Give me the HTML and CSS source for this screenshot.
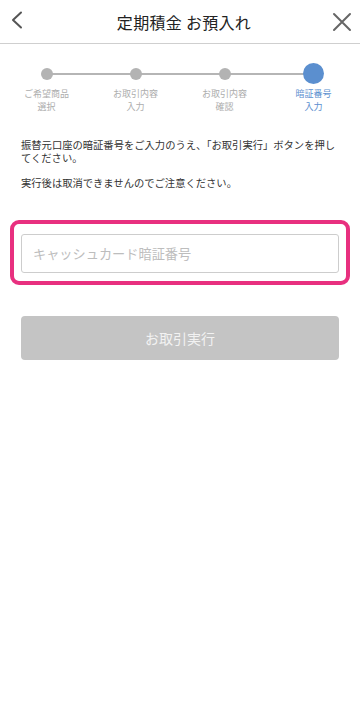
FILE: index.html
```html
<!DOCTYPE html>
<html lang="ja">
<head>
<meta charset="utf-8">
<meta name="viewport" content="width=device-width, initial-scale=1">
<title>定期積金 お預入れ</title>
<link rel="stylesheet" href="styles.css">
</head>
<body>
<header class="header">
  <button class="icon-btn back" aria-label="戻る">
    <svg width="20" height="24" viewBox="0 0 20 24"><path d="M11 2.5 L3 10 L11 17.5" fill="none" stroke="#555" stroke-width="2" stroke-linecap="round" stroke-linejoin="round"/></svg>
  </button>
  <h1 class="title">定期積金 お預入れ</h1>
  <button class="icon-btn close" aria-label="閉じる">
    <svg width="20" height="20" viewBox="0 0 20 20"><path d="M2 2 L18 18 M18 2 L2 18" fill="none" stroke="#666" stroke-width="2" stroke-linecap="round"/></svg>
  </button>
</header>

<ol class="stepper">
  <li class="step"><span class="dot-wrap"><span class="dot"></span></span><span class="label">ご希望商品<br>選択</span></li>
  <li class="step"><span class="dot-wrap"><span class="dot"></span></span><span class="label">お取引内容<br>入力</span></li>
  <li class="step"><span class="dot-wrap"><span class="dot"></span></span><span class="label">お取引内容<br>確認</span></li>
  <li class="step active"><span class="dot-wrap"><span class="dot"></span></span><span class="label">暗証番号<br>入力</span></li>
</ol>

<main class="content">
  <p class="text">振替元口座の暗証番号をご入力のうえ、「お取引実行」ボタンを押してください。</p>
  <p class="text second">実行後は取消できませんのでご注意ください。</p>

  <div class="highlight">
    <input class="pin" type="password" placeholder="キャッシュカード暗証番号">
  </div>

  <button class="submit" disabled>お取引実行</button>
</main>
</body>
</html>
```

FILE: styles.css
```css
* { box-sizing: border-box; }
html, body { margin: 0; padding: 0; background: #fff; }
body {
  font-family: "Noto Sans CJK JP", "Noto Sans", sans-serif;
  color: #333;
  width: 360px;
}

.header {
  height: 44px;
  border-bottom: 1px solid #cfcfcf;
  display: flex;
  align-items: center;
  justify-content: space-between;
  padding: 0 8px 0 10px;
}
.icon-btn {
  background: none;
  border: 0;
  padding: 0;
  display: flex;
  align-items: center;
  justify-content: center;
}
.back { width: 20px; height: 24px; margin-top: 1px; }
.close { width: 20px; height: 20px; }
.title {
  margin: 0 0 0 6px;
  font-size: 16px;
  font-weight: 400;
  color: #222;
  line-height: 20px;
  letter-spacing: 0.3px;
}

.stepper {
  list-style: none;
  margin: 0;
  padding: 19px 2px 0;
  display: grid;
  grid-template-columns: repeat(4, 89px);
  position: relative;
}
.stepper::before {
  content: "";
  position: absolute;
  left: 46.5px;
  right: 46.5px;
  top: 28.5px;
  height: 2px;
  background: #b5b5b5;
}
.step {
  display: flex;
  flex-direction: column;
  align-items: center;
  position: relative;
}
.dot-wrap {
  height: 21px;
  display: flex;
  align-items: center;
  justify-content: center;
}
.dot {
  width: 12px;
  height: 12px;
  border-radius: 50%;
  background: #b3b3b3;
}
.step.active .dot {
  width: 21px;
  height: 21px;
  background: #5b8fcf;
}
.label {
  margin-top: 4px;
  font-size: 9px;
  line-height: 12.5px;
  color: #adadad;
  text-align: center;
}
.step.active .label { color: #5b8fcf; }

.text {
  margin: 26px 18px 0 21px;
  font-size: 10.3px;
  line-height: 12.5px;
  color: #333;
}
.text.second { margin-top: 13px; }

.highlight {
  margin: 30px 10px 0;
  border: 4px solid #e8307f;
  border-radius: 9px;
  padding: 10px 7px 8px;
}
.pin {
  display: block;
  width: 100%;
  height: 39px;
  border: 1px solid #cdcdcd;
  border-radius: 3px;
  padding: 0 11px;
  font-family: inherit;
  font-size: 13.2px;
  color: #333;
  background: #fff;
  outline: none;
}
.pin::placeholder { color: #bdbdbd; }

.submit {
  display: block;
  margin: 31px 21px 0;
  width: 318px;
  height: 44px;
  border: 0;
  border-radius: 4px;
  background: #c4c4c4;
  color: #f2f2f2;
  font-family: inherit;
  font-size: 14px;
}
```
